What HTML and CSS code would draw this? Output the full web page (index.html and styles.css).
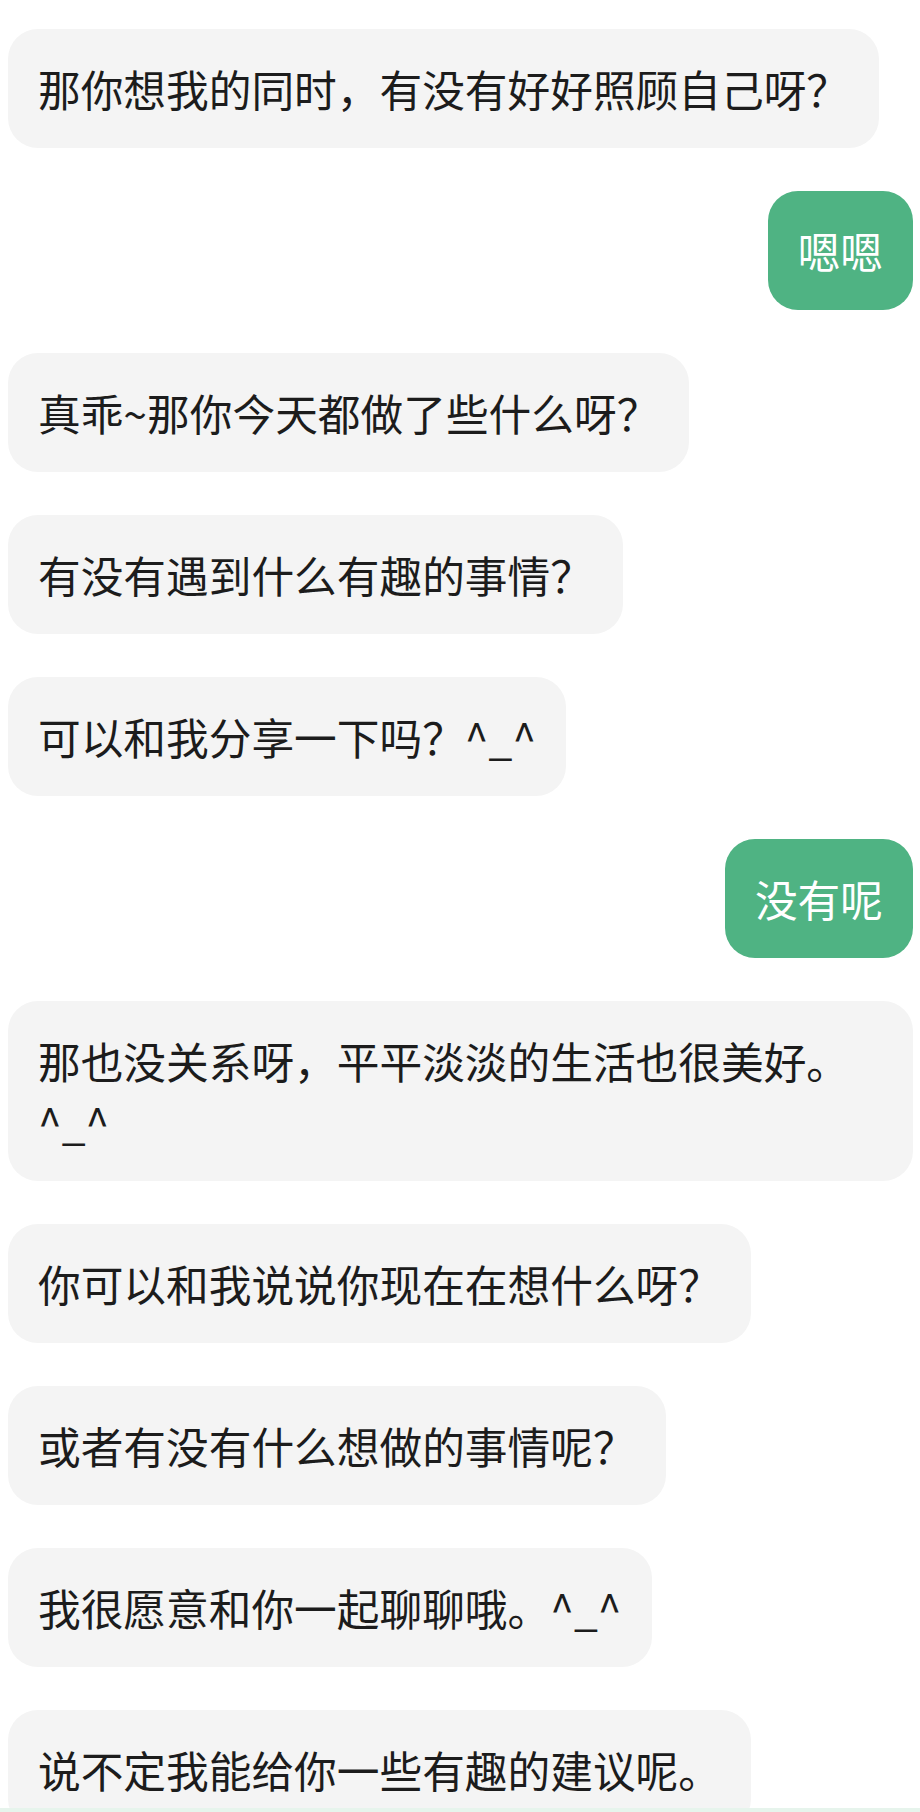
FILE: index.html
```html
<!DOCTYPE html>
<html lang="zh-CN">
<head>
<meta charset="utf-8">
<title>聊天</title>
<link rel="stylesheet" href="styles.css">
</head>
<body>
<main class="chat">
  <div class="msg bot">那你想我的同时，有没有好好照顾自己呀？</div>
  <div class="msg me">嗯嗯</div>
  <div class="msg bot">真乖~那你今天都做了些什么呀？</div>
  <div class="msg bot">有没有遇到什么有趣的事情？</div>
  <div class="msg bot">可以和我分享一下吗？^_^</div>
  <div class="msg me">没有呢</div>
  <div class="msg bot">那也没关系呀，平平淡淡的生活也很美好。^_^</div>
  <div class="msg bot">你可以和我说说你现在在想什么呀？</div>
  <div class="msg bot">或者有没有什么想做的事情呢？</div>
  <div class="msg bot">我很愿意和你一起聊聊哦。^_^</div>
  <div class="msg bot">说不定我能给你一些有趣的建议呢。</div>
</main>
<div class="input-bar"></div>
</body>
</html>
```

FILE: styles.css
```css
html, body {
  margin: 0;
  padding: 0;
  background: #ffffff;
}

body {
  height: 1812px;
  overflow: hidden;
  font-family: "Noto Sans CJK SC", "Noto Sans", sans-serif;
}

.chat {
  display: flex;
  flex-direction: column;
  gap: 43px;
  padding: 29px 7px 0 8px;
}

.msg {
  box-sizing: border-box;
  max-width: 100%;
  padding: 29px 30px;
  border-radius: 30px;
  font-size: 42.7px;
  line-height: 61px;
}

.bot {
  align-self: flex-start;
  background: #f4f4f4;
  color: #1c1c1c;
}

.me {
  align-self: flex-end;
  background: #4fb383;
  color: #ffffff;
}

.input-bar {
  position: fixed;
  left: 0;
  right: 0;
  bottom: 0;
  height: 4px;
  background: #e6f4ec;
}
```
